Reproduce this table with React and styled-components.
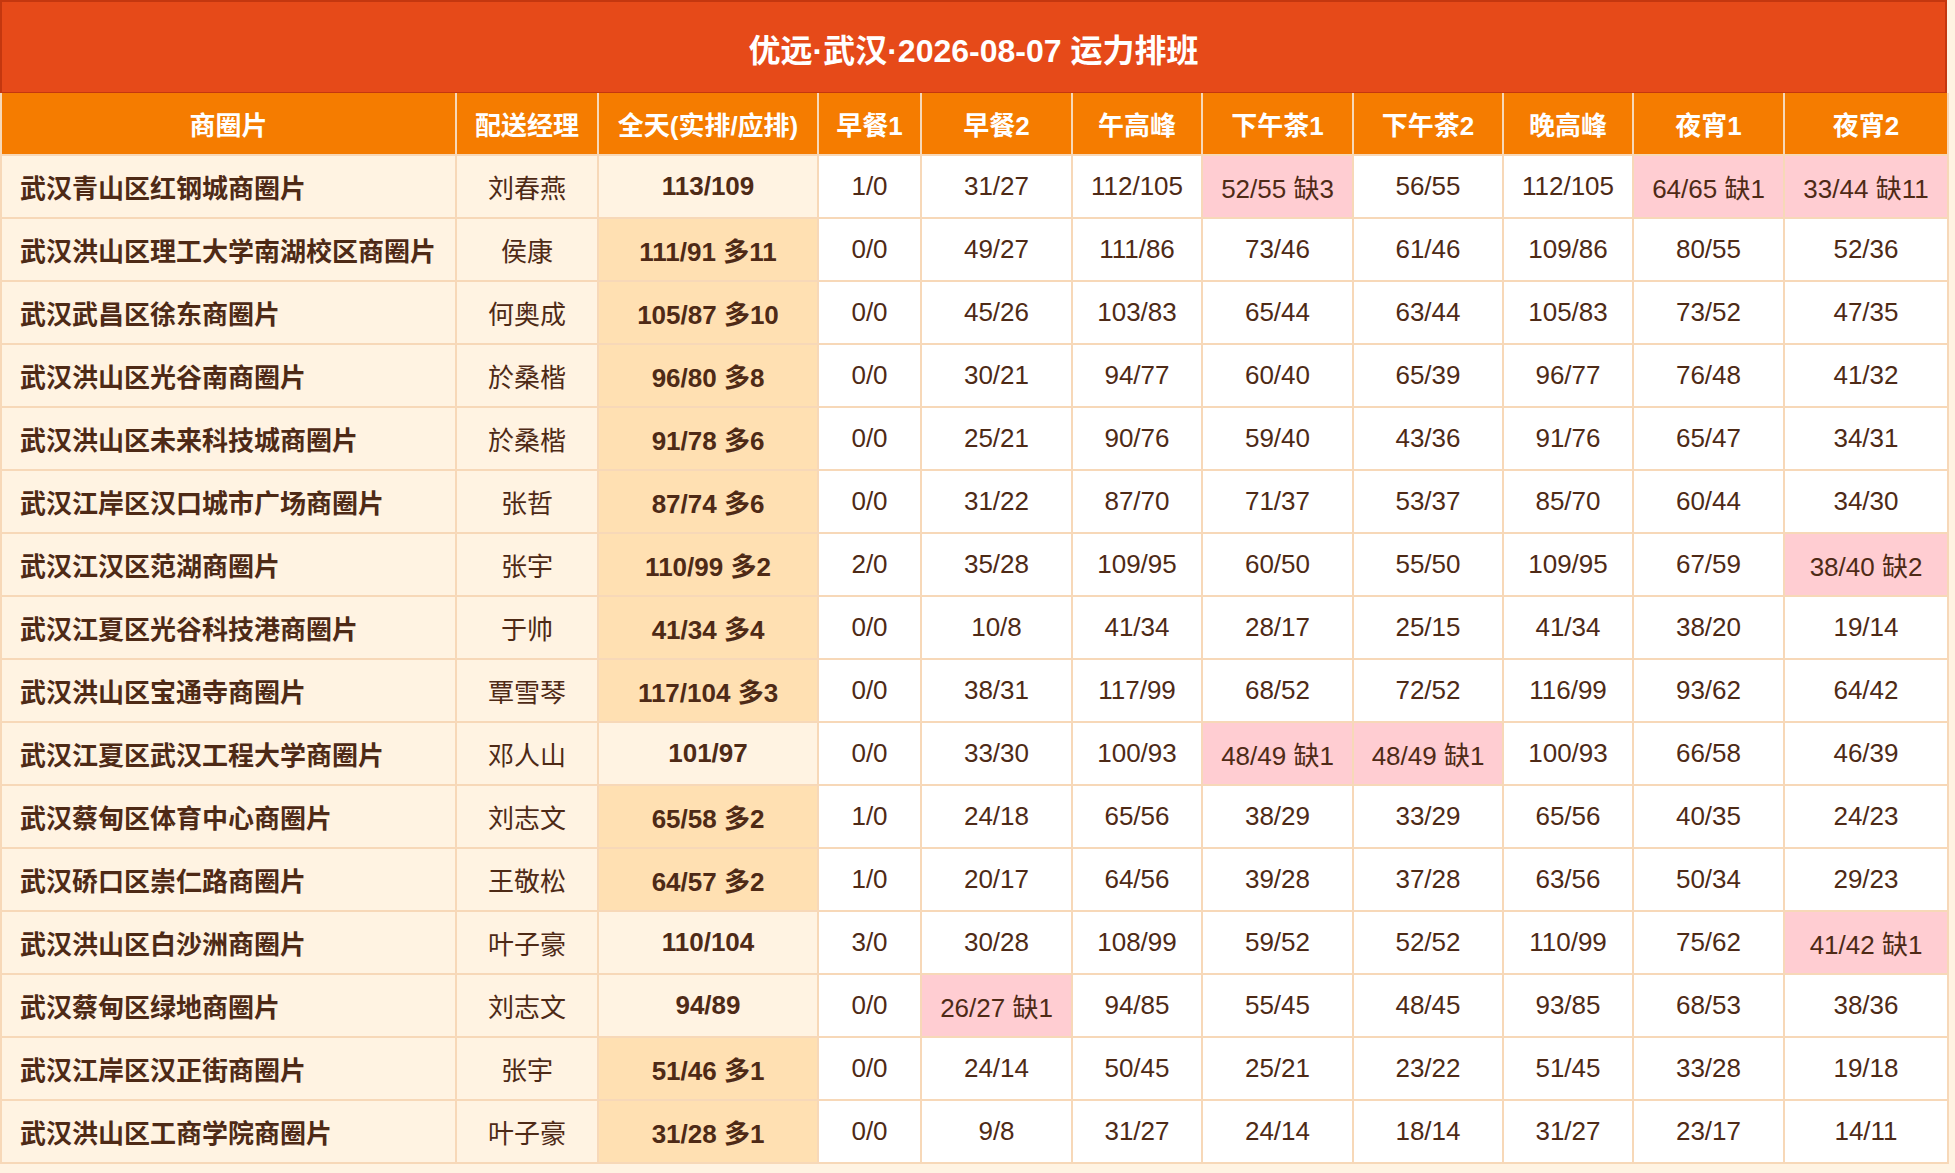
import React from 'react';
import styled, { createGlobalStyle } from 'styled-components';

const COLUMNS = [
  { key: 'area', label: '商圈片', width: 455 },
  { key: 'manager', label: '配送经理', width: 142 },
  { key: 'total', label: '全天(实排/应排)', width: 220 },
  { key: 'b1', label: '早餐1', width: 103 },
  { key: 'b2', label: '早餐2', width: 151 },
  { key: 'noon', label: '午高峰', width: 130 },
  { key: 't1', label: '下午茶1', width: 151 },
  { key: 't2', label: '下午茶2', width: 150 },
  { key: 'eve', label: '晚高峰', width: 130 },
  { key: 'n1', label: '夜宵1', width: 151 },
  { key: 'n2', label: '夜宵2', width: 164 },
];

const ROWS = [
  ['武汉青山区红钢城商圈片', '刘春燕', '113/109', '1/0', '31/27', '112/105', '52/55 缺3', '56/55', '112/105', '64/65 缺1', '33/44 缺11'],
  ['武汉洪山区理工大学南湖校区商圈片', '侯康', '111/91 多11', '0/0', '49/27', '111/86', '73/46', '61/46', '109/86', '80/55', '52/36'],
  ['武汉武昌区徐东商圈片', '何奥成', '105/87 多10', '0/0', '45/26', '103/83', '65/44', '63/44', '105/83', '73/52', '47/35'],
  ['武汉洪山区光谷南商圈片', '於桑楷', '96/80 多8', '0/0', '30/21', '94/77', '60/40', '65/39', '96/77', '76/48', '41/32'],
  ['武汉洪山区未来科技城商圈片', '於桑楷', '91/78 多6', '0/0', '25/21', '90/76', '59/40', '43/36', '91/76', '65/47', '34/31'],
  ['武汉江岸区汉口城市广场商圈片', '张哲', '87/74 多6', '0/0', '31/22', '87/70', '71/37', '53/37', '85/70', '60/44', '34/30'],
  ['武汉江汉区范湖商圈片', '张宇', '110/99 多2', '2/0', '35/28', '109/95', '60/50', '55/50', '109/95', '67/59', '38/40 缺2'],
  ['武汉江夏区光谷科技港商圈片', '于帅', '41/34 多4', '0/0', '10/8', '41/34', '28/17', '25/15', '41/34', '38/20', '19/14'],
  ['武汉洪山区宝通寺商圈片', '覃雪琴', '117/104 多3', '0/0', '38/31', '117/99', '68/52', '72/52', '116/99', '93/62', '64/42'],
  ['武汉江夏区武汉工程大学商圈片', '邓人山', '101/97', '0/0', '33/30', '100/93', '48/49 缺1', '48/49 缺1', '100/93', '66/58', '46/39'],
  ['武汉蔡甸区体育中心商圈片', '刘志文', '65/58 多2', '1/0', '24/18', '65/56', '38/29', '33/29', '65/56', '40/35', '24/23'],
  ['武汉硚口区崇仁路商圈片', '王敬松', '64/57 多2', '1/0', '20/17', '64/56', '39/28', '37/28', '63/56', '50/34', '29/23'],
  ['武汉洪山区白沙洲商圈片', '叶子豪', '110/104', '3/0', '30/28', '108/99', '59/52', '52/52', '110/99', '75/62', '41/42 缺1'],
  ['武汉蔡甸区绿地商圈片', '刘志文', '94/89', '0/0', '26/27 缺1', '94/85', '55/45', '48/45', '93/85', '68/53', '38/36'],
  ['武汉江岸区汉正街商圈片', '张宇', '51/46 多1', '0/0', '24/14', '50/45', '25/21', '23/22', '51/45', '33/28', '19/18'],
  ['武汉洪山区工商学院商圈片', '叶子豪', '31/28 多1', '0/0', '9/8', '31/27', '24/14', '18/14', '31/27', '23/17', '14/11'],
];

const TONES = {
  plain: '#ffffff',
  cream: '#fff3e2',
  surplus: '#ffe0b2',
  short: '#ffcdd2',
};

const toneFor = (value, index) => {
  if (value.includes('缺')) return 'short';
  if (index === 2) return value.includes('多') ? 'surplus' : 'cream';
  if (index < 2) return 'cream';
  return 'plain';
};

const GlobalStyle = createGlobalStyle`
  html, body {
    margin: 0;
    padding: 0;
    background: #fff3e2;
  }
  body {
    font-family: "Liberation Sans", "Noto Sans CJK SC", sans-serif;
    color: #4e2a16;
  }
`;

const App = () => (
  <>
    <GlobalStyle />
    <S.Page>
      <S.Title>优远·武汉·2026-08-07 运力排班</S.Title>
      <S.Table>
        <colgroup>
          {COLUMNS.map((col) => (
            <col key={col.key} style={{ width: col.width }} />
          ))}
        </colgroup>
        <thead>
          <S.HeadRow>
            {COLUMNS.map((col) => (
              <S.Th key={col.key}>{col.label}</S.Th>
            ))}
          </S.HeadRow>
        </thead>
        <tbody>
          {ROWS.map((row) => (
            <S.Row key={row[0]}>
              {row.map((value, index) => (
                <S.Td
                  key={COLUMNS[index].key}
                  $tone={toneFor(value, index)}
                  $bold={index === 0 || index === 2}
                  $left={index === 0}
                >
                  {value}
                </S.Td>
              ))}
            </S.Row>
          ))}
        </tbody>
      </S.Table>
    </S.Page>
  </>
);

export default App;

const BORDER = '#f7d8b8';

export const S = {
  Page: styled.div`
    width: 1947px;
    display: flex;
    flex-direction: column;
  `,
  Title: styled.div`
    height: 89px;
    display: flex;
    align-items: center;
    justify-content: center;
    background: #e64a19;
    border: 2px solid #c4370f;
    color: #ffffff;
    font-size: 32px;
    font-weight: bold;
    padding-top: 1px;
    box-sizing: content-box;
  `,
  Table: styled.table`
    width: 1947px;
    table-layout: fixed;
    border-collapse: collapse;
    margin-top: -1px;
  `,
  HeadRow: styled.tr`
    height: 62px;
    background: #f57c00;
  `,
  Th: styled.th`
    padding: 0;
    border: 2px solid ${BORDER};
    border-top: none;
    color: #ffffff;
    font-size: 26px;
    font-weight: bold;
    text-align: center;
    white-space: nowrap;
  `,
  Row: styled.tr`
    height: 63px;
  `,
  Td: styled.td`
    padding: ${({ $left }) => ($left ? '0 0 0 18px' : '0')};
    border: 2px solid ${BORDER};
    background: ${({ $tone }) => TONES[$tone]};
    font-size: 26px;
    font-weight: ${({ $bold }) => ($bold ? 'bold' : 'normal')};
    text-align: ${({ $left }) => ($left ? 'left' : 'center')};
    white-space: nowrap;
  `,
};
